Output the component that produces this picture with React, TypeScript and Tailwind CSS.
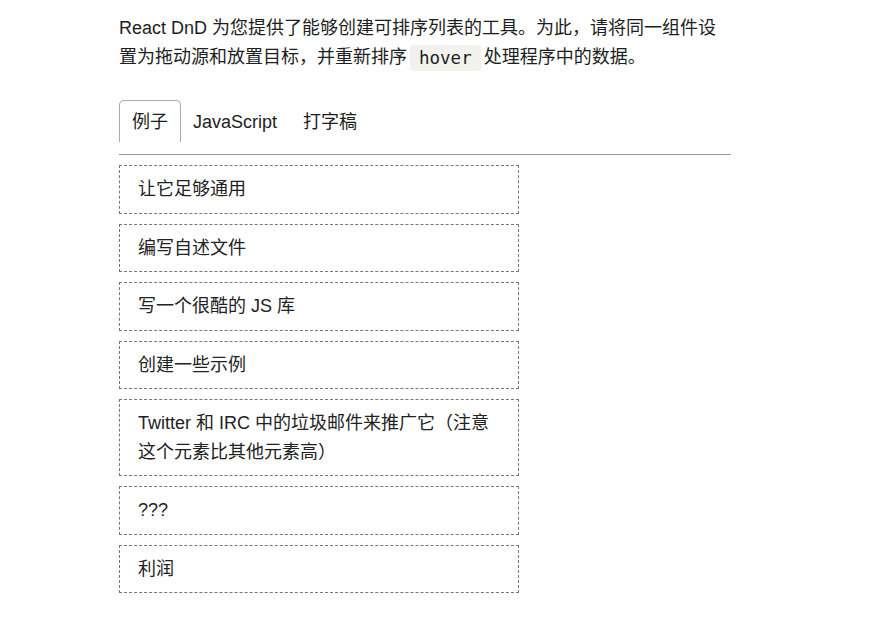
import React from "react";

const items = [
  "让它足够通用",
  "编写自述文件",
  "写一个很酷的 JS 库",
  "创建一些示例",
  "Twitter 和 IRC 中的垃圾邮件来推广它（注意这个元素比其他元素高）",
  "???",
  "利润",
];

export default function App() {
  return (
    <div
      className="min-h-[629px] w-[873px] bg-white text-[#1c1e21]"
      style={{ fontFamily: '"Liberation Sans", "Noto Sans CJK SC", sans-serif' }}
    >
      <div className="ml-[119px] w-[612px] pt-[14px]">
        <p className="text-[18px] leading-[29px]">
          React DnD 为您提供了能够创建可排序列表的工具。为此，请将同一组件设置为拖动源和放置目标，并重新排序
          <code
            className="mx-[3px] inline-block rounded-[4px] bg-[#f3f1ee] px-[9px] py-[3px] align-middle text-[17.5px] leading-[20px]"
            style={{ fontFamily: '"DejaVu Sans Mono", monospace' }}
          >
            hover
          </code>
          处理程序中的数据。
        </p>
        <div className="mt-[28px] flex h-[42px] items-stretch">
          <div className="flex items-center rounded-t-[5px] border border-b-0 border-[#aaaaaa] px-[12px] pt-[2px] text-[18px]">
            例子
          </div>
          <div className="flex items-center px-[12px] pt-[2px] text-[18px]">JavaScript</div>
          <div className="flex items-center px-[14px] pt-[2px] text-[18px]">打字稿</div>
        </div>
        <div className="mt-[12px] h-px w-[612px] bg-[#999999]"></div>
        <div className="mt-[10px] flex flex-col gap-[10px]">
          {items.map((t) => (
            <div
              key={t}
              className="w-[400px] border border-dashed border-[#777777] px-[18px] py-[9px] text-[18px] leading-[28.5px] text-[#222222]"
            >
              {t}
            </div>
          ))}
        </div>
      </div>
    </div>
  );
}
